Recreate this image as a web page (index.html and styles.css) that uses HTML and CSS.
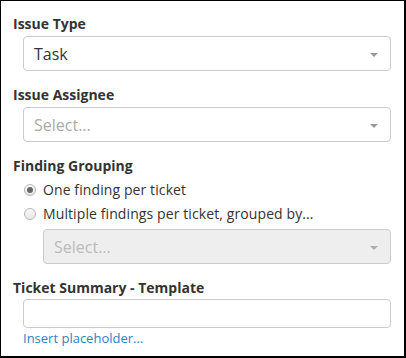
FILE: index.html
```html
<!DOCTYPE html>
<html lang="en">

<head>
    <meta charset="UTF-8">
    <meta name="viewport" content="width=device-width, initial-scale=1.0">
    <title>Ticket Settings</title>
    <link rel="stylesheet" href="styles.css">
</head>

<body>
    <div class="ticket-panel">
        <div class="field">
            <label class="field-label">Issue Type</label>
            <div class="select-box">
                <span class="select-value">Task</span>
                <span class="select-arrow"></span>
            </div>
        </div>
        <div class="field">
            <label class="field-label">Issue Assignee</label>
            <div class="select-box">
                <span class="select-placeholder">Select...</span>
                <span class="select-arrow"></span>
            </div>
        </div>
        <div class="field">
            <label class="field-label">Finding Grouping</label>
            <div class="radio-row">
                <span class="radio checked"></span>
                <span class="radio-text">One finding per ticket</span>
            </div>
            <div class="radio-row">
                <span class="radio"></span>
                <span class="radio-text">Multiple findings per ticket, grouped by...</span>
            </div>
            <div class="select-box disabled indented">
                <span class="select-placeholder">Select...</span>
                <span class="select-arrow"></span>
            </div>
        </div>
        <div class="field">
            <label class="field-label">Ticket Summary - Template</label>
            <input type="text" class="text-input">
            <a href="#" class="insert-link">Insert placeholder...</a>
        </div>
    </div>
</body>

</html>
```

FILE: styles.css
```css
body {
    margin: 0;
    font-family: 'Open Sans', 'Noto Sans', sans-serif;
    background-color: #fff;
}

.ticket-panel {
    box-sizing: border-box;
    width: 406px;
    height: 358px;
    border: 1px solid #000;
    border-right-width: 2px;
    border-bottom-width: 2px;
    padding: 14px 13px 0 12px;
}

.field {
    margin-bottom: 15px;
}

.field-label {
    display: block;
    font-size: 14px;
    font-weight: bold;
    line-height: 18px;
    color: #333;
    margin-bottom: 3px;
}

.select-box {
    box-sizing: border-box;
    height: 35px;
    margin-left: 10px;
    border: 1px solid #ccc;
    border-radius: 4px;
    display: flex;
    align-items: center;
    justify-content: space-between;
    padding: 0 12px 0 10px;
    background-color: #fff;
}

.select-box.disabled {
    background-color: #eee;
}

.select-box.indented {
    margin-left: 30px;
    margin-top: 3px;
}

.select-value {
    font-size: 16px;
    color: #333;
}

.select-placeholder {
    font-size: 16px;
    color: #aaa;
}

.select-arrow {
    width: 0;
    height: 0;
    margin-top: 2px;
    border-left: 4px solid transparent;
    border-right: 4px solid transparent;
    border-top: 4px solid #999;
}

.disabled .select-placeholder,
.disabled .select-arrow {
    opacity: 0.75;
}

.radio-row {
    display: flex;
    align-items: center;
    height: 25px;
    margin-left: 11px;
    margin-top: -1px;
}

.radio {
    box-sizing: border-box;
    width: 12px;
    height: 12px;
    border-radius: 50%;
    border: 1px solid #b5b5b5;
    background: linear-gradient(#fcfcfc, #e6e6e6);
    margin-right: 7px;
    position: relative;
}

.radio.checked::after {
    content: "";
    position: absolute;
    left: 2px;
    top: 2px;
    width: 6px;
    height: 6px;
    border-radius: 50%;
    background-color: #666;
}

.radio-text {
    font-size: 14px;
    letter-spacing: 0.1px;
    color: #333;
}

.text-input {
    display: block;
    box-sizing: border-box;
    width: calc(100% - 10px);
    height: 29px;
    margin-left: 10px;
    margin-top: -1px;
    border: 1px solid #ccc;
    border-radius: 4px;
    font-size: 14px;
}

.insert-link {
    display: block;
    margin: 2px 0 0 10px;
    font-size: 13px;
    line-height: 16px;
    color: #2d83c4;
    text-decoration: none;
}
```
